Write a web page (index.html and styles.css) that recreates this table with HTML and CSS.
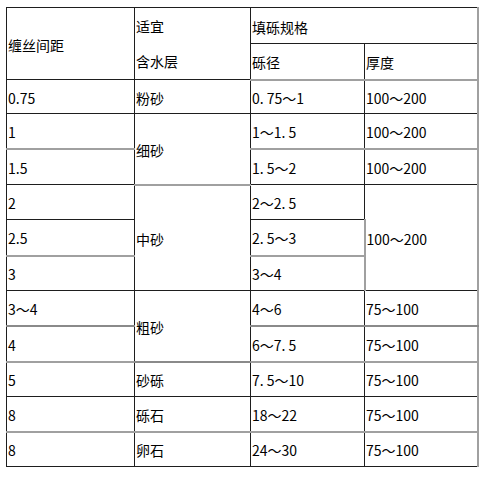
FILE: index.html
```html
<!DOCTYPE html>
<html lang="zh">
<head>
<meta charset="utf-8">
<link rel="stylesheet" href="styles.css">
</head>
<body>
<table class="spec">
  <colgroup>
    <col class="c1"><col class="c2"><col class="c3"><col class="c4">
  </colgroup>
  <tr class="h1">
    <td rowspan="2">缠丝间距</td>
    <td rowspan="2" class="two">适宜<br>含水层</td>
    <td colspan="2">填砾规格</td>
  </tr>
  <tr class="h2 g">
    <td>砾径</td>
    <td class="dim">厚度</td>
  </tr>
  <tr class="r34">
    <td>0.75</td><td>粉砂</td><td>0. 75～1</td><td class="dim">100～200</td>
  </tr>
  <tr class="r35 g">
    <td>1</td><td rowspan="2">细砂</td><td>1～1. 5</td><td class="dim">100～200</td>
  </tr>
  <tr class="r36">
    <td>1.5</td><td>1. 5～2</td><td class="dim">100～200</td>
  </tr>
  <tr class="r35">
    <td>2</td><td rowspan="3">中砂</td><td>2～2. 5</td><td rowspan="3" class="dim">100～200</td>
  </tr>
  <tr class="r36 g">
    <td>2.5</td><td>2. 5～3</td>
  </tr>
  <tr class="r35">
    <td>3</td><td>3～4</td>
  </tr>
  <tr class="r35 m">
    <td>3～4</td><td rowspan="2">粗砂</td><td>4～6</td><td class="dim">75～100</td>
  </tr>
  <tr class="r36 g">
    <td>4</td><td>6～7. 5</td><td class="dim">75～100</td>
  </tr>
  <tr class="r35">
    <td>5</td><td>砂砾</td><td>7. 5～10</td><td class="dim">75～100</td>
  </tr>
  <tr class="r35 g">
    <td>8</td><td>砾石</td><td>18～22</td><td class="dim">75～100</td>
  </tr>
  <tr class="r35">
    <td>8</td><td>卵石</td><td>24～30</td><td class="dim">75～100</td>
  </tr>
</table>
</body>
</html>
```
FILE: styles.css
```css
html, body {
  margin: 0;
  padding: 0;
  background: #fff;
}
body {
  padding: 7px 0 0 6px;
}
.spec {
  border-collapse: collapse;
  table-layout: fixed;
  width: 471px;
  font-family: "Noto Sans CJK SC", "Noto Sans", sans-serif;
  font-size: 14px;
  color: #000;
  border-right: 2px solid #a0a0a0;
}
.c1 { width: 128px; }
.c2 { width: 116px; }
.c3 { width: 114px; }
.c4 { width: 113px; }
.spec td {
  border: 1px solid #1e1e1e;
  padding: 2px 0 0 1px;
  line-height: 16px;
  vertical-align: middle;
  text-align: left;
  white-space: nowrap;
}
.spec td.dim {
  border-left: 1px solid #555;
}
.spec td:last-child {
  border-right: 2px solid #a0a0a0;
}
.spec td.two {
  line-height: 35px;
  padding-top: 0;
}
.h1 { height: 36px; }
.h2 { height: 36px; }
.r34 { height: 34px; }
.r35 { height: 35px; }
.r36 { height: 36px; }
.spec tr.g > td {
  border-bottom: 2px solid #a0a0a0;
}
.spec tr.m > td {
  border-bottom: 2px solid #8a8a8a;
}
```
